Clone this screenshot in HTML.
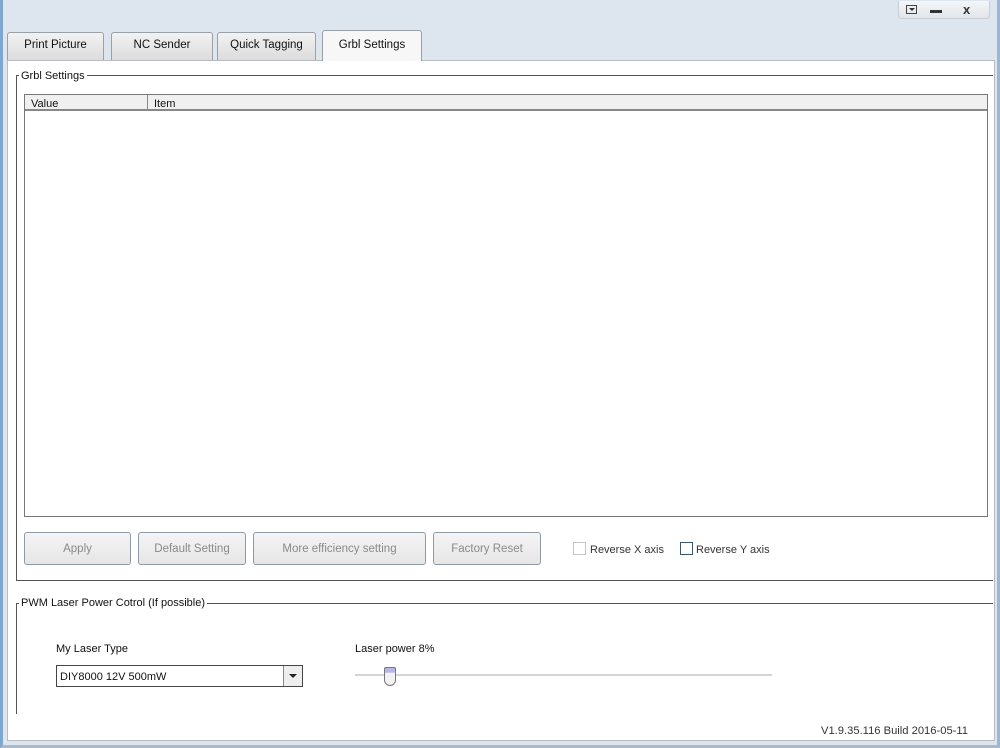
<!DOCTYPE html>
<html><head><style>
*{box-sizing:border-box;margin:0;padding:0}
body{width:1000px;height:748px;background:#dde6ee;font-family:"Liberation Sans",sans-serif;font-size:11px;color:#111;position:relative;overflow:hidden}
.a{position:absolute}
.tab{position:absolute;top:32px;height:28px;border:1px solid #9aa0a6;border-bottom:none;background:linear-gradient(#f2f2f2,#dcdcdc);border-radius:3px 3px 0 0;text-align:center;line-height:24px;font-size:11.5px}
.btn{position:absolute;top:532px;height:33px;border:1px solid #8e9aa6;border-radius:3px;background:linear-gradient(#f4f4f4,#e6e6e6);color:#8a8a8a;text-align:center;line-height:33px;font-size:11.5px}
.cb{position:absolute;top:542px;width:13px;height:13px;border:1px solid #c5c5c5;background:#fff}
</style></head><body>
<div class="a" style="left:0;top:0;width:1000px;height:748px;border-left:3px solid #7fa6cf;border-right:3px solid #9ab7d6;border-bottom:3px solid #a9b9c9"></div>
<div class="a" style="left:898px;top:1px;width:92px;height:18px;border:1px solid #c8ced6;border-top:none;background:linear-gradient(#f4f6f8,#e2e6ea);border-radius:0 0 4px 4px"></div>
<div class="a" style="left:906px;top:5px;width:11px;height:9px;border:1px solid #444"></div>
<div class="a" style="left:909px;top:8px;width:0;height:0;border-left:3px solid transparent;border-right:3px solid transparent;border-top:3px solid #333"></div>
<div class="a" style="left:930px;top:10px;width:12px;height:3px;background:#333"></div>
<div class="a" style="left:963px;top:2px;font-size:13px;font-weight:bold;color:#333">x</div>
<div class="a" style="left:7px;top:60px;width:988px;height:681px;background:#fff;border:1px solid #b8bcc0"></div>
<div class="tab" style="left:7px;width:97px">Print Picture</div>
<div class="tab" style="left:111px;width:102px">NC Sender</div>
<div class="tab" style="left:217px;width:99px">Quick Tagging</div>
<div class="tab" style="left:322px;top:30px;height:31px;width:100px;background:#f7f7f7;border-color:#9aa0a6;line-height:28px">Grbl Settings</div>
<div class="a" style="left:16px;top:75px;width:977px;height:506px;border:1px solid #555;border-right:none;border-top:1px solid #555"></div>
<div class="a" style="left:19px;top:70px;background:#fff;padding:0 2px;font-size:11px">Grbl Settings</div>
<div class="a" style="left:24px;top:94px;width:964px;height:423px;border:1px solid #777;background:#fff"></div>
<div class="a" style="left:25px;top:95px;width:962px;height:16px;background:#f0f0f0;border-bottom:2px solid #888"></div>
<div class="a" style="left:147px;top:95px;width:1px;height:16px;background:#888"></div>
<div class="a" style="left:31px;top:98px">Value</div>
<div class="a" style="left:154px;top:98px">Item</div>
<div class="btn" style="left:24px;width:107px">Apply</div>
<div class="btn" style="left:138px;width:108px">Default Setting</div>
<div class="btn" style="left:253px;width:173px">More efficiency setting</div>
<div class="btn" style="left:433px;width:108px">Factory Reset</div>
<div class="cb" style="left:573px"></div>
<div class="a" style="left:590px;top:544px;color:#333">Reverse X axis</div>
<div class="cb" style="left:680px;border-color:#3b5670"></div>
<div class="a" style="left:696px;top:544px;color:#333">Reverse Y axis</div>
<div class="a" style="left:16px;top:603px;width:977px;height:111px;border-left:1px solid #555;border-top:1px solid #555"></div>
<div class="a" style="left:19px;top:597px;background:#fff;padding:0 2px">PWM Laser Power Cotrol (If possible)</div>
<div class="a" style="left:56px;top:643px">My Laser Type</div>
<div class="a" style="left:56px;top:665px;width:247px;height:22px;border:1px solid #444;background:#fff;padding:5px 3px;font-size:11px">DIY8000 12V 500mW</div>
<div class="a" style="left:283px;top:666px;width:19px;height:20px;border-left:1px solid #888;background:#eee"></div>
<div class="a" style="left:289px;top:674px;border-left:4px solid transparent;border-right:4px solid transparent;border-top:4px solid #222"></div>
<div class="a" style="left:355px;top:643px">Laser power 8%</div>
<div class="a" style="left:355px;top:674px;width:417px;height:2px;background:#d4d4d4"></div>
<div class="a" style="left:384px;top:667px;width:12px;height:19px;border:1px solid #777;border-radius:2px 2px 6px 6px;background:linear-gradient(#b6b6e8 25%,#f2f2f2 30%)"></div>
<div class="a" style="left:821px;top:725px;font-size:11.2px;color:#333">V1.9.35.116 Build 2016-05-11</div>
</body></html>
